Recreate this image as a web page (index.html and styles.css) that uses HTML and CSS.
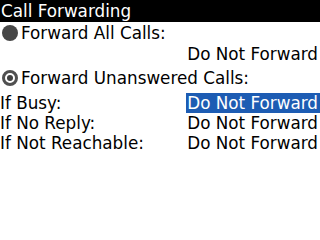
FILE: index.html
```html
<!DOCTYPE html>
<html>
<head>
<meta charset="utf-8">
<link rel="stylesheet" href="styles.css">
</head>
<body>
<div class="screen">
  <div class="title">Call Forwarding</div>
  <div class="radio-row first">
    <span class="radio filled"></span>
    <span>Forward All Calls:</span>
  </div>
  <div class="value-row"><span class="value">Do Not Forward</span></div>
  <div class="radio-row second">
    <span class="radio selected"><span class="dot"></span></span>
    <span>Forward Unanswered Calls:</span>
  </div>
  <div class="fields">
    <div class="field">
      <span class="label">If Busy:</span>
      <span class="value focus">Do Not Forward</span>
    </div>
    <div class="field">
      <span class="label">If No Reply:</span>
      <span class="value">Do Not Forward</span>
    </div>
    <div class="field">
      <span class="label">If Not Reachable:</span>
      <span class="value">Do Not Forward</span>
    </div>
  </div>
</div>
</body>
</html>
```
FILE: styles.css
```css
html, body {
  margin: 0;
  padding: 0;
  background: #fff;
}
.screen {
  width: 320px;
  height: 240px;
  overflow: hidden;
  font-family: "DejaVu Sans", sans-serif;
  font-size: 16.8px;
  color: #000;
  white-space: nowrap;
}
.title {
  background: #000;
  color: #fff;
  height: 22px;
  line-height: 22px;
  padding-left: 1px;
}
.radio-row {
  display: flex;
  align-items: center;
  gap: 3px;
  padding-left: 2px;
  height: 20px;
  line-height: 20px;
}
.radio-row.first {
  margin-top: 1px;
}
.radio-row.second {
  margin-top: 4px;
}
.radio {
  width: 16px;
  height: 16px;
  border-radius: 50%;
  background: #474747;
  display: flex;
  align-items: center;
  justify-content: center;
  flex: none;
}
.radio.selected {
  box-sizing: border-box;
  background: #fff;
  border: 3px solid #505050;
}
.radio .dot {
  width: 6px;
  height: 6px;
  border-radius: 50%;
  background: #404040;
}
.value-row {
  display: flex;
  justify-content: flex-end;
  height: 20px;
  line-height: 20px;
  margin-top: 1px;
  padding-right: 2px;
}
.fields {
  margin-top: 5px;
}
.field {
  display: flex;
  justify-content: space-between;
  height: 20px;
  line-height: 20px;
}
.field .value {
  width: 134px;
  box-sizing: border-box;
  text-align: right;
  padding-right: 2px;
}
.focus {
  background: #1d5cb3;
  color: #fff;
}
```
